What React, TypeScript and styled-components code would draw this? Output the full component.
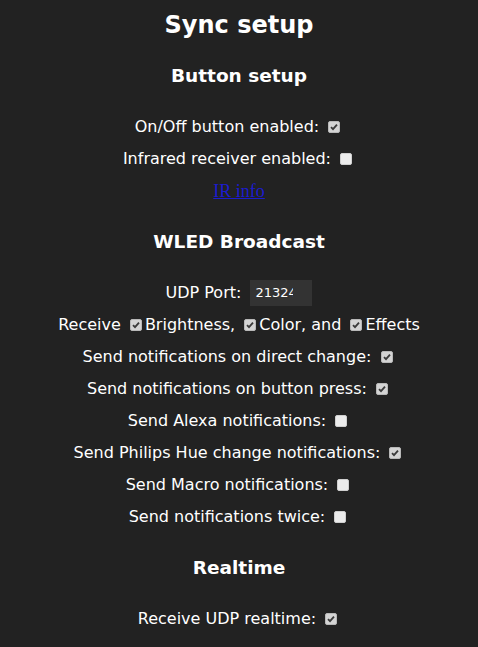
import React from "react";
import styled, { createGlobalStyle } from "styled-components";

const Global = createGlobalStyle`
  html, body { margin: 0; padding: 0; background: #222; }
  body {
    font-family: "DejaVu Sans", Verdana, sans-serif;
    color: #fff;
    text-align: center;
    font-size: 16px;
    line-height: 32px;
  }
`;

const Page = styled.div`
  display: flex;
  flex-direction: column;
  align-items: center;
  width: 478px;
`;

const Title = styled.h2`
  margin: 9px 0 0;
  font-size: 24px;
  line-height: 32px;
  font-weight: bold;
`;

const Heading = styled.h3`
  margin: 19px 0;
  font-size: 18.5px;
  line-height: 32px;
  font-weight: bold;
`;

const Row = styled.div`
  display: flex;
  align-items: center;
  justify-content: center;
  height: 32px;
  white-space: pre;
`;

const Box = styled.span<{ $checked: boolean }>`
  display: inline-flex;
  align-items: center;
  justify-content: center;
  box-sizing: border-box;
  width: 12px;
  height: 12px;
  margin: 0 3px 0 4px;
  border-radius: 2px;
  border: 1px solid ${(p) => (p.$checked ? "#b8b8b8" : "#cfcfcf")};
  background: ${(p) => (p.$checked ? "#d4d4d4" : "#ececec")};
`;

const Link = styled.a`
  font-family: "Liberation Serif", "Times New Roman", serif;
  font-size: 18px;
  color: #1c1ccf;
  text-decoration: underline;
`;

const NumberField = styled.span`
  display: inline-flex;
  align-items: center;
  box-sizing: border-box;
  width: 62px;
  height: 26px;
  margin-left: 4px;
  padding-left: 5px;
  background: #333;
  font-size: 13px;
  line-height: 26px;
`;

const NumberText = styled.span`
  display: block;
  width: 38px;
  overflow: hidden;
  text-align: left;
`;

function Check({ checked }: { checked: boolean }) {
  return (
    <Box $checked={checked}>
      {checked && (
        <svg width="8" height="8" viewBox="0 0 8 8">
          <path d="M1 4.2 L3 6.2 L7 1.6" fill="none" stroke="#3a3a3a" strokeWidth="1.8" />
        </svg>
      )}
    </Box>
  );
}

const CheckRow = ({ label, checked }: { label: string; checked: boolean }) => (
  <Row>
    {label} <Check checked={checked} />
  </Row>
);

export default function App() {
  return (
    <Page>
      <Global />
      <Title>Sync setup</Title>
      <Heading>Button setup</Heading>
      <CheckRow label="On/Off button enabled:" checked />
      <CheckRow label="Infrared receiver enabled:" checked={false} />
      <Row>
        <Link href="#">IR info</Link>
      </Row>
      <Heading>WLED Broadcast</Heading>
      <Row>
        UDP Port: <NumberField><NumberText>21324</NumberText></NumberField>
      </Row>
      <Row>
        Receive <Check checked />Brightness, <Check checked />Color, and <Check checked />Effects
      </Row>
      <CheckRow label="Send notifications on direct change:" checked />
      <CheckRow label="Send notifications on button press:" checked />
      <CheckRow label="Send Alexa notifications:" checked={false} />
      <CheckRow label="Send Philips Hue change notifications:" checked />
      <CheckRow label="Send Macro notifications:" checked={false} />
      <CheckRow label="Send notifications twice:" checked={false} />
      <Heading>Realtime</Heading>
      <CheckRow label="Receive UDP realtime:" checked />
    </Page>
  );
}
